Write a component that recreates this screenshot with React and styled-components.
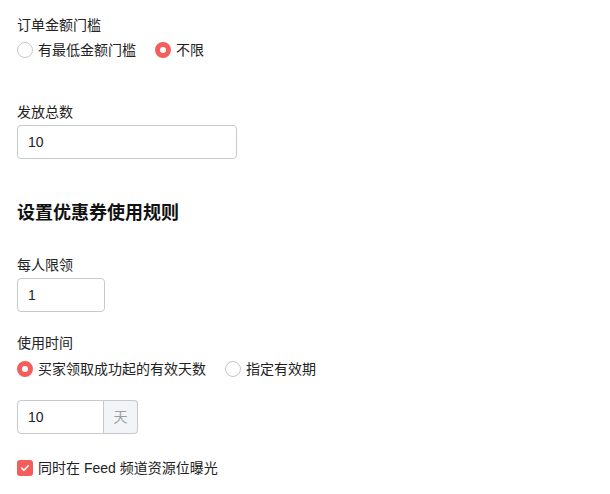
import React, { useState } from 'react'
import styled, { createGlobalStyle } from 'styled-components'

const GlobalStyle = createGlobalStyle`
  body {
    margin: 0;
    background: #fff;
    font-family: "Liberation Sans", "Noto Sans CJK SC", sans-serif;
    color: #222;
  }
`

const RED = '#f55c5c'

const Page = styled.div`
  padding: 15px 17px;
  font-size: 14px;
  line-height: 20px;
`

const Field = styled.div`
  display: flex;
  flex-direction: column;
  align-items: flex-start;
  margin-top: ${p => p.top || 0}px;
`

const Label = styled.div`
  margin-bottom: ${p => p.space || 3}px;
`

const Heading = styled.h3`
  margin: ${p => p.top || 0}px 0 0;
  font-size: 18px;
  line-height: 24px;
  font-weight: 700;
  color: #111;
`

const RadioRow = styled.div`
  display: flex;
  align-items: center;
  gap: 19px;
  height: 20px;
`

const Option = styled.label`
  display: flex;
  align-items: center;
  gap: 5px;
  cursor: pointer;
`

const Dot = styled.span`
  box-sizing: border-box;
  width: 16px;
  height: 16px;
  border-radius: 50%;
  background: #fff;
  border: ${p => (p.checked ? `5px solid ${RED}` : '1px solid #c3c7cf')};
`

const Input = styled.input`
  box-sizing: border-box;
  width: ${p => p.w}px;
  height: 34px;
  padding: 0 10px;
  border: 1px solid #c5c9d0;
  border-radius: ${p => (p.joined ? '4px 0 0 4px' : '4px')};
  font-family: "Liberation Sans", sans-serif;
  font-size: 14px;
  color: #222;
  outline: none;
`

const Group = styled.div`
  display: flex;
  margin-top: ${p => p.top || 0}px;
`

const Addon = styled.span`
  box-sizing: border-box;
  width: 34px;
  height: 34px;
  display: flex;
  align-items: center;
  justify-content: center;
  background: #f3f4f7;
  border: 1px solid #c5c9d0;
  border-left: none;
  border-radius: 0 4px 4px 0;
  color: #9a9da3;
`

const CheckRow = styled.label`
  display: flex;
  align-items: center;
  gap: 5px;
  margin-top: ${p => p.top || 0}px;
  height: 20px;
`

const Box = styled.span`
  width: 16px;
  height: 16px;
  border-radius: 3px;
  background: ${RED};
  display: flex;
  align-items: center;
  justify-content: center;
`

const RadioGroup = ({ options, value, onChange }) => (
  <RadioRow>
    {options.map(o => (
      <Option key={o} onClick={() => onChange(o)}>
        <Dot checked={value === o} />
        {o}
      </Option>
    ))}
  </RadioRow>
)

export default function App() {
  const [limit, setLimit] = useState('不限')
  const [time, setTime] = useState('买家领取成功起的有效天数')

  return (
    <Page>
      <GlobalStyle />
      <Field>
        <Label space={5}>订单金额门槛</Label>
        <RadioGroup options={['有最低金额门槛', '不限']} value={limit} onChange={setLimit} />
      </Field>

      <Field top={42}>
        <Label>发放总数</Label>
        <Input w={220} defaultValue="10" />
      </Field>

      <Heading top={42}>设置优惠券使用规则</Heading>

      <Field top={30}>
        <Label>每人限领</Label>
        <Input w={88} defaultValue="1" />
      </Field>

      <Field top={21}>
        <Label space={6}>使用时间</Label>
        <RadioGroup
          options={['买家领取成功起的有效天数', '指定有效期']}
          value={time}
          onChange={setTime}
        />
        <Group top={21}>
          <Input w={87} joined defaultValue="10" />
          <Addon>天</Addon>
        </Group>
      </Field>

      <CheckRow top={24}>
        <Box>
          <svg width="10" height="10" viewBox="0 0 10 10">
            <path d="M1.8 5.2 L4 7.3 L8.3 2.8" fill="none" stroke="#fff" strokeWidth="1.6" strokeLinecap="round" strokeLinejoin="round" />
          </svg>
        </Box>
        同时在 Feed 频道资源位曝光
      </CheckRow>
    </Page>
  )
}
